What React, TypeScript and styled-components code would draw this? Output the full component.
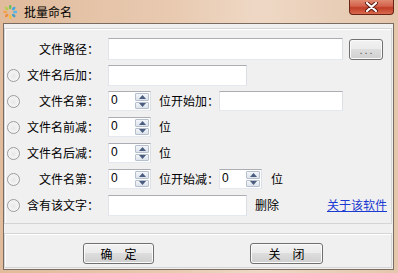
import { createGlobalStyle } from "styled-components";
import styled from "styled-components";

const GlobalStyle = createGlobalStyle`
  html, body {
    margin: 0;
    padding: 0;
    background: #ffffff;
  }
  body {
    font-family: "Noto Sans CJK SC", "Noto Sans", sans-serif;
    font-size: 12px;
    color: #000000;
  }
`;

const Window = styled.div`
  width: 398px;
  height: 273px;
  box-sizing: border-box;
  display: flex;
  flex-direction: column;
  background: linear-gradient(90deg, #e0bb9c 0%, #e9cbb2 45%, #eed8c5 65%, #e4c6ac 100%);
  overflow: hidden;
`;

const TitleBar = styled.div`
  height: 23px;
  flex-shrink: 0;
  display: flex;
  align-items: center;
`;

const AppIcon = styled.svg`
  width: 16px;
  height: 16px;
  margin-left: 2px;
  flex-shrink: 0;
`;

const Caption = styled.div`
  margin-left: 6px;
  font-size: 12px;
  line-height: 14px;
  color: #000;
`;

const CloseButton = styled.div`
  align-self: flex-start;
  margin-left: auto;
  margin-right: 4px;
  width: 45px;
  height: 15px;
  box-sizing: border-box;
  border: 1px solid #6a2418;
  border-top: none;
  border-radius: 0 0 4px 4px;
  background: linear-gradient(#e08a70 0%, #d2604a 45%, #c13d26 55%, #d86a4e 100%);
  display: flex;
  align-items: center;
  justify-content: center;
`;

const Client = styled.div`
  margin: 0 4px 0 3px;
  height: 247px;
  box-sizing: border-box;
  border: 1px solid #7a6c60;
  background: #f0f0f0;
  padding: 4px 1px 0 0;
  display: flex;
  flex-direction: column;
`;

const Panel = styled.div<{ $h: number }>`
  height: ${(p) => p.$h}px;
  box-sizing: border-box;
  border: 1px solid #d5d5d5;
  box-shadow: inset 1px 1px 0 #ffffff;
`;

const FormPanel = styled(Panel)`
  padding: 7px 0 5px 0;
  display: flex;
  flex-direction: column;
`;

const ButtonPanel = styled(Panel)`
  margin-top: 9px;
  padding: 9px 0 0 78px;
  display: flex;
  align-items: flex-start;
  gap: 96px;
`;

const Row = styled.div`
  height: 26px;
  display: flex;
  align-items: center;
`;

const RadioSlot = styled.div`
  width: 21px;
  padding-left: 2px;
  box-sizing: border-box;
  flex-shrink: 0;
  display: flex;
  align-items: center;
`;

const Radio = styled.div`
  width: 13px;
  height: 13px;
  box-sizing: border-box;
  border-radius: 50%;
  border: 1px solid #9c9c9c;
  background: radial-gradient(circle at 50% 55%, #e6e6e6 0%, #f2f2f2 45%, #d9d9d9 100%);
  box-shadow: inset 0 0 0 1px #f7f7f7;
`;

const Label = styled.div`
  width: 73px;
  flex-shrink: 0;
  text-align: right;
  white-space: nowrap;
  line-height: 14px;
`;

const Controls = styled.div`
  margin-left: 9px;
  flex: 1;
  display: flex;
  align-items: center;
  padding-right: 4px;
`;

const TextBox = styled.div<{ $w: number; $h: number }>`
  width: ${(p) => p.$w}px;
  height: ${(p) => p.$h}px;
  box-sizing: border-box;
  flex-shrink: 0;
  background: #ffffff;
  border: 1px solid;
  border-color: #abadb3 #dbdfe6 #e3e9ef #e2e3ea;
`;

const Spin = styled.div`
  width: 43px;
  height: 20px;
  box-sizing: border-box;
  flex-shrink: 0;
  background: #ffffff;
  border: 1px solid;
  border-color: #abadb3 #dbdfe6 #e3e9ef #e2e3ea;
  display: flex;
  align-items: stretch;
`;

const SpinValue = styled.div`
  flex: 1;
  padding-left: 2px;
  font-family: "Liberation Sans", Arial, sans-serif;
  font-size: 12px;
  line-height: 17px;
`;

const SpinButtons = styled.div`
  width: 14px;
  margin: 1px 1px 1px 0;
  display: flex;
  flex-direction: column;
  gap: 1px;
`;

const SpinHalf = styled.div`
  flex: 1;
  box-sizing: border-box;
  border: 1px solid #b6c0cc;
  border-radius: 1px;
  background: linear-gradient(#f3f6fa, #dde3ec);
  display: flex;
  align-items: center;
  justify-content: center;
`;

const Text = styled.div<{ $ml?: number }>`
  margin-left: ${(p) => p.$ml ?? 0}px;
  white-space: nowrap;
  line-height: 14px;
`;

const Link = styled.a`
  margin-left: auto;
  color: #1c3bd1;
  text-decoration: underline;
  white-space: nowrap;
  line-height: 14px;
  cursor: pointer;
`;

const PushButton = styled.div<{ $w: number; $ml?: number }>`
  width: ${(p) => p.$w}px;
  height: 21px;
  margin-left: ${(p) => p.$ml ?? 0}px;
  box-sizing: border-box;
  flex-shrink: 0;
  border: 1px solid #707070;
  border-radius: 3px;
  background: linear-gradient(#f2f2f2 0%, #ebebeb 49%, #dddddd 50%, #cfcfcf 100%);
  box-shadow: inset 0 0 0 1px #fbfbfb;
  display: flex;
  align-items: center;
  justify-content: center;
  white-space: pre;
  line-height: 14px;
`;

const Dots = styled.span`
  font-family: "Liberation Sans", Arial, sans-serif;
  font-size: 11px;
  letter-spacing: 2px;
  color: #555;
  margin-top: 2px;
  padding-left: 2px;
`;

function SpinBox({ value }: { value: string }) {
  return (
    <Spin>
      <SpinValue>{value}</SpinValue>
      <SpinButtons>
        <SpinHalf>
          <svg width="7" height="4" viewBox="0 0 7 4">
            <path d="M0 4 L3.5 0 L7 4 Z" fill="#4a5d7e" />
          </svg>
        </SpinHalf>
        <SpinHalf>
          <svg width="7" height="4" viewBox="0 0 7 4">
            <path d="M0 0 L3.5 4 L7 0 Z" fill="#4a5d7e" />
          </svg>
        </SpinHalf>
      </SpinButtons>
    </Spin>
  );
}

const petals = [
  { a: 0, c: "#6cbf5a" },
  { a: 45, c: "#3fa7dd" },
  { a: 90, c: "#58b6e6" },
  { a: 135, c: "#42a0c8" },
  { a: 180, c: "#f3c13a" },
  { a: 225, c: "#f08d3a" },
  { a: 270, c: "#f2a24f" },
  { a: 315, c: "#b3cf4a" },
];

export default function App() {
  return (
    <>
      <GlobalStyle />
      <Window>
        <TitleBar>
          <AppIcon viewBox="0 0 16 16">
            {petals.map((p) => (
              <rect
                key={p.a}
                x="7"
                y="1"
                width="2.4"
                height="4"
                rx="1.2"
                fill={p.c}
                transform={`rotate(${p.a} 8.2 8)`}
              />
            ))}
          </AppIcon>
          <Caption>批量命名</Caption>
          <CloseButton>
            <svg width="13" height="10" viewBox="0 0 13 10">
              <path
                d="M2 1 L11 9 M11 1 L2 9"
                stroke="#5a1a10"
                strokeWidth="4"
                strokeLinecap="round"
              />
              <path
                d="M2 1 L11 9 M11 1 L2 9"
                stroke="#ffffff"
                strokeWidth="2.2"
                strokeLinecap="round"
              />
            </svg>
          </CloseButton>
        </TitleBar>
        <Client>
          <FormPanel $h={196}>
            <Row>
              <RadioSlot />
              <Label>文件路径：</Label>
              <Controls>
                <TextBox $w={235} $h={22} />
                <PushButton $w={34} $ml={6}>
                  <Dots>...</Dots>
                </PushButton>
              </Controls>
            </Row>
            <Row>
              <RadioSlot>
                <Radio />
              </RadioSlot>
              <Label>文件名后加：</Label>
              <Controls>
                <TextBox $w={139} $h={21} />
              </Controls>
            </Row>
            <Row>
              <RadioSlot>
                <Radio />
              </RadioSlot>
              <Label>文件名第：</Label>
              <Controls>
                <SpinBox value="0" />
                <Text $ml={8}>位开始加：</Text>
                <TextBox $w={124} $h={20} />
              </Controls>
            </Row>
            <Row>
              <RadioSlot>
                <Radio />
              </RadioSlot>
              <Label>文件名前减：</Label>
              <Controls>
                <SpinBox value="0" />
                <Text $ml={8}>位</Text>
              </Controls>
            </Row>
            <Row>
              <RadioSlot>
                <Radio />
              </RadioSlot>
              <Label>文件名后减：</Label>
              <Controls>
                <SpinBox value="0" />
                <Text $ml={8}>位</Text>
              </Controls>
            </Row>
            <Row>
              <RadioSlot>
                <Radio />
              </RadioSlot>
              <Label>文件名第：</Label>
              <Controls>
                <SpinBox value="0" />
                <Text $ml={8}>位开始减：</Text>
                <SpinBox value="0" />
                <Text $ml={9}>位</Text>
              </Controls>
            </Row>
            <Row>
              <RadioSlot>
                <Radio />
              </RadioSlot>
              <Label>含有该文字：</Label>
              <Controls>
                <TextBox $w={139} $h={21} />
                <Text $ml={8}>删除</Text>
                <Link>关于该软件</Link>
              </Controls>
            </Row>
          </FormPanel>
          <ButtonPanel $h={35}>
            <PushButton $w={71}>{"确\u3000定"}</PushButton>
            <PushButton $w={73}>{"关\u3000闭"}</PushButton>
          </ButtonPanel>
        </Client>
      </Window>
    </>
  );
}
